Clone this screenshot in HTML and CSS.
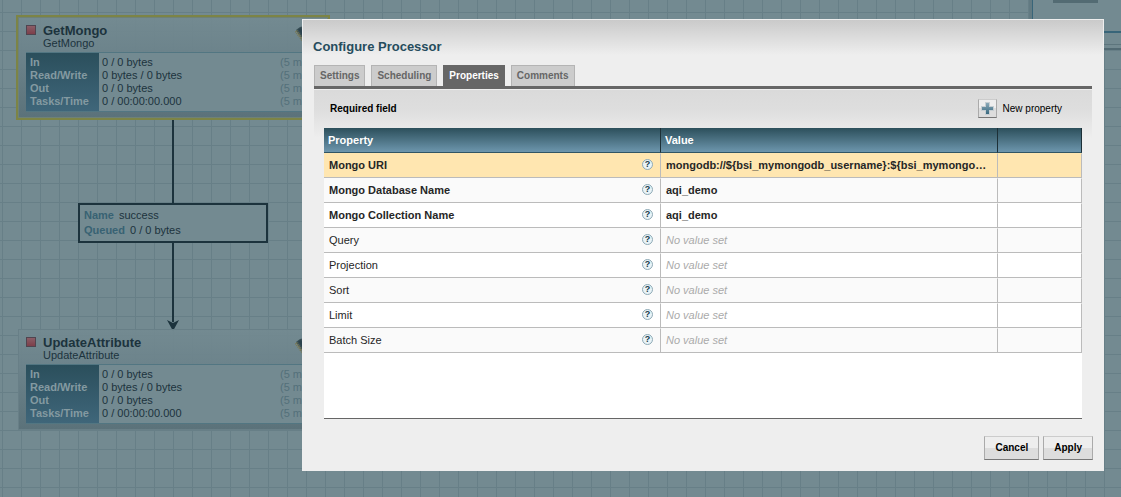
FILE: index.html
```html
<!DOCTYPE html>
<html lang="en">
<head>
<meta charset="utf-8">
<title>Configure Processor</title>
<link rel="stylesheet" href="styles.css">
</head>
<body>
<main class="canvas">
  <svg class="link" width="14" height="213" viewBox="0 0 14 213" aria-hidden="true">
    <path d="M7 0V204" stroke="#1c333d" stroke-width="2"/>
    <path d="M1 202L7 205L13 202L7 213Z" fill="#1c333d"/>
  </svg>

  <section class="node node-get selected">
    <header class="node-head">
      <span class="stopped"></span>
      <div class="node-names"><h2>GetMongo</h2><p>GetMongo</p></div>
      <svg class="chip" width="20" height="20" viewBox="0 0 20 20" aria-hidden="true"><path d="M1 5L5 2L10 1L19 9L10 18L7 14Z" fill="#3a4f56"/><path d="M3 4L6 3L9 8L7 10Z" fill="#2b424c"/><path d="M1 6L9 17" stroke="#7a7750" stroke-width="3" stroke-dasharray="1 1"/></svg>
    </header>
    <dl class="stats">
      <dt>In</dt><dd>0 / 0 bytes<i>(5 min)</i></dd>
      <dt>Read/Write</dt><dd>0 bytes / 0 bytes<i>(5 min)</i></dd>
      <dt>Out</dt><dd>0 / 0 bytes<i>(5 min)</i></dd>
      <dt>Tasks/Time</dt><dd>0 / 00:00:00.000<i>(5 min)</i></dd>
    </dl>
  </section>

  <dl class="connection">
    <div><dt>Name</dt><dd>success</dd></div>
    <div><dt>Queued</dt><dd>0 / 0 bytes</dd></div>
  </dl>

  <section class="node node-update">
    <header class="node-head">
      <span class="stopped"></span>
      <div class="node-names"><h2>UpdateAttribute</h2><p>UpdateAttribute</p></div>
      <svg class="chip" width="20" height="20" viewBox="0 0 20 20" aria-hidden="true"><path d="M1 5L5 2L10 1L19 9L10 18L7 14Z" fill="#3a4f56"/><path d="M3 4L6 3L9 8L7 10Z" fill="#2b424c"/><path d="M1 6L9 17" stroke="#7a7750" stroke-width="3" stroke-dasharray="1 1"/></svg>
    </header>
    <dl class="stats">
      <dt>In</dt><dd>0 / 0 bytes<i>(5 min)</i></dd>
      <dt>Read/Write</dt><dd>0 bytes / 0 bytes<i>(5 min)</i></dd>
      <dt>Out</dt><dd>0 / 0 bytes<i>(5 min)</i></dd>
      <dt>Tasks/Time</dt><dd>0 / 00:00:00.000<i>(5 min)</i></dd>
    </dl>
  </section>

  <aside class="corner">
    <div class="corner-tools"><span class="corner-block"></span></div>
    <div class="corner-bar"></div>
  </aside>
</main>

<div class="overlay">
  <div class="dialog" role="dialog" aria-labelledby="dialog-title">
    <h1 class="title" id="dialog-title">Configure Processor</h1>
    <div class="body">
      <div class="tabs" role="tablist">
        <button class="tab" role="tab">Settings</button>
        <button class="tab" role="tab">Scheduling</button>
        <button class="tab active" role="tab" aria-selected="true">Properties</button>
        <button class="tab" role="tab">Comments</button>
      </div>
      <div class="panel" role="tabpanel">
        <div class="toolbar">
          <strong>Required field</strong>
          <div class="new-property">
            <button class="add" id="add" aria-label="New property">
              <svg width="13" height="13" viewBox="0 0 13 13" aria-hidden="true"><defs><linearGradient id="plus" x2="0" y2="1"><stop offset="0" stop-color="#8aa9b8"/><stop offset="1" stop-color="#3a6a80"/></linearGradient></defs><path d="M4 0H9V4H13V9H9V13H4V9H0V4H4Z" fill="#c6ced2"/><path d="M5 1H8V5H12V8H8V12H5V8H1V5H5Z" fill="url(#plus)"/></svg>
            </button>
            <label for="add">New property</label>
          </div>
        </div>
        <div class="grid">
          <table>
            <colgroup><col class="col-name"><col class="col-value"><col class="col-actions"></colgroup>
            <thead><tr><th>Property</th><th>Value</th><th></th></tr></thead>
            <tbody>
              <tr class="required chosen"><td><div class="name">Mongo URI<button class="help">?</button></div></td><td>mongodb://${bsi_mymongodb_username}:${bsi_mymongo…</td><td></td></tr>
              <tr class="required"><td><div class="name">Mongo Database Name<button class="help">?</button></div></td><td>aqi_demo</td><td></td></tr>
              <tr class="required"><td><div class="name">Mongo Collection Name<button class="help">?</button></div></td><td>aqi_demo</td><td></td></tr>
              <tr><td><div class="name">Query<button class="help">?</button></div></td><td class="unset">No value set</td><td></td></tr>
              <tr><td><div class="name">Projection<button class="help">?</button></div></td><td class="unset">No value set</td><td></td></tr>
              <tr><td><div class="name">Sort<button class="help">?</button></div></td><td class="unset">No value set</td><td></td></tr>
              <tr><td><div class="name">Limit<button class="help">?</button></div></td><td class="unset">No value set</td><td></td></tr>
              <tr><td><div class="name">Batch Size<button class="help">?</button></div></td><td class="unset">No value set</td><td></td></tr>
            </tbody>
          </table>
        </div>
      </div>
    </div>
    <footer class="actions">
      <button class="action">Cancel</button>
      <button class="action">Apply</button>
    </footer>
  </div>
</div>
</body>
</html>
```

FILE: styles.css
```css
* { box-sizing: border-box; }
body {
  margin: 0;
  font: 11px/13px "Liberation Sans", Arial, sans-serif;
  color: #262626;
}
h1, h2, p, dl, dd { margin: 0; }
button { font: inherit; color: inherit; padding: 0; margin: 0; }

/* Flow canvas */
.canvas {
  position: relative;
  height: 100vh;
  overflow: hidden;
  color: #1c333d;
  background:
    linear-gradient(90deg, #677f87 1px, transparent 1px) 2px 12px / 19px 19px,
    linear-gradient(#677f87 1px, transparent 1px) 2px 12px / 19px 19px,
    #738a91;
}
.link { position: absolute; left: 166px; top: 118px; }
.node {
  position: absolute;
  left: 18px;
  width: 310px;
  padding: 6px 7px 5px;
  border: 1px solid #687f87;
  background: linear-gradient(rgba(115, 138, 145, .9), rgba(107, 130, 138, .95) 40%, #5b727a);
}
.node-get { top: 17px; }
.node-update { top: 329px; }
.selected { outline: 2px solid #7c8446; border-color: #6e8177; }
.node-head {
  display: flex;
  align-items: flex-start;
  height: 28px;
}
.stopped {
  width: 10px;
  height: 10px;
  margin: 1px 7px 0 0;
  border: 1px solid #50444f;
  background: linear-gradient(#8a5d66, #7d3f4a);
}
.node-names { flex: 1; }
.node-names h2 { font-size: 13px; line-height: 13px; }
.stats {
  display: grid;
  grid-template-columns: 73px 1fr;
  padding: 3px 0;
  border: 1px solid #527682;
  border-width: 1px 0;
  background: linear-gradient(#2b4f5c, #3f667a) 0 0 / 73px 100% no-repeat, #738a91;
}
.stats dt { padding-left: 4px; font-weight: bold; color: #849aa1; }
.stats dd { display: flex; justify-content: space-between; padding: 0 2px 0 3px; }
.stats i { width: 38px; font-style: normal; color: #54707a; }
.chip { margin: 1px 5px 0 0; }
.connection {
  position: absolute;
  left: 78px;
  top: 203px;
  width: 190px;
  padding: 3px 4px;
  border: 2px solid #1c333d;
  background: #738a91;
  line-height: 15px;
}
.connection div { display: flex; gap: 5px; }
.connection dt { font-weight: bold; color: #386273; }

.corner { position: absolute; right: 0; top: 0; width: 89px; }
.corner-tools {
  height: 33px;
  padding-left: 20px;
  border: solid #386579;
  border-width: 0 0 2px 1px;
  background: #738a91;
  box-shadow: -3px 0 #627a82;
}
.corner-block {
  display: block;
  width: 45px;
  height: 3px;
  background: #536b73;
}
.corner-bar {
  height: 17px;
  border-bottom: 2px solid #526a73;
  background: linear-gradient(#5d757d, #5d757d) 0 11px / 100% 1px no-repeat, #738a91;
}

/* Dialog */
.overlay {
  position: fixed;
  inset: 0;
  display: flex;
  padding: 19px 17px 26px 302px;
}
.dialog {
  flex: 1;
  min-width: 0;
  display: flex;
  flex-direction: column;
  padding: 20px 10px 10px;
  border: 1px solid #eee;
  background: linear-gradient(#cacaca, #eee 35px);
}
.title {
  height: 25px;
  font-size: 13px;
  line-height: 14px;
  color: #264c5d;
}
.body {
  flex: 1;
  display: flex;
  flex-direction: column;
  padding: 0 1px;
}
.tabs {
  display: flex;
  gap: 6px;
  border-bottom: 3px solid #666;
}
.tab {
  height: 21px;
  padding: 0 5px 2px;
  border: 1px solid #b4b4b4;
  border-bottom: 0;
  background: #ccc;
  font-size: 10px;
  font-weight: bold;
  color: #666;
}
.tab.active { background: #666; border-color: #666; color: #fff; }
.panel {
  flex: 1;
  display: flex;
  flex-direction: column;
  margin-top: 1px;
  padding: 0 10px;
  background: linear-gradient(#dadada, #dedede 20px, #eee 48px);
}
.toolbar {
  display: flex;
  align-items: center;
  justify-content: space-between;
  height: 38px;
  padding: 0 20px 2px 6px;
  font-size: 10px;
  color: #000;
}
.new-property { display: flex; align-items: center; gap: 6px; }
.add {
  display: grid;
  place-items: center;
  width: 19px;
  height: 19px;
  border: 1px solid #aaa;
  border-top-color: #ccc;
  border-bottom-color: #777;
  background: linear-gradient(#eee 50%, #ddd 50%);
}
.grid { flex: 1; border-bottom: 1px solid #666; background: #fff; }
table {
  width: 100%;
  table-layout: fixed;
  border-collapse: separate;
  border-spacing: 0;
}
.col-name, .col-value { width: 337px; }
th, td {
  height: 25px;
  padding: 0 5px;
  text-align: left;
  overflow: hidden;
  text-overflow: ellipsis;
  white-space: nowrap;
}
th {
  padding: 0 4px;
  border-right: 1px solid #1d3037;
  border-bottom: 1px solid #315564;
  background: linear-gradient(#2c4f5b, #6d96ad);
  color: #fff;
}
td {
  border: solid #bbb;
  border-width: 1px 1px 1px 0;
  border-top-color: #fff;
}
tr:nth-child(even) td { background: #fafafa; border-top-color: #fafafa; }
.chosen td { background: #ffe6b0; border-top-color: #ffe6b0; }
.required { font-weight: bold; }
.unset { font-style: italic; color: #aaa; }
.name { display: flex; align-items: flex-start; justify-content: space-between; padding-right: 2px; }
.help {
  width: 11px;
  height: 11px;
  border: 1px solid #8eaab6;
  border-radius: 50%;
  background: #e9f3f7;
  color: #17394a;
  font-size: 9px;
  font-weight: bold;
  line-height: 9px;
}
.actions {
  display: flex;
  justify-content: flex-end;
  gap: 4px;
  padding-top: 17px;
}
.action {
  height: 24px;
  padding: 0 10px 2px;
  border: 1px solid #aaa;
  border-top-color: #ccc;
  border-bottom-color: #777;
  background: linear-gradient(#eee 50%, #ddd 50%);
  font-size: 10px;
  font-weight: bold;
  color: #000;
}
```
